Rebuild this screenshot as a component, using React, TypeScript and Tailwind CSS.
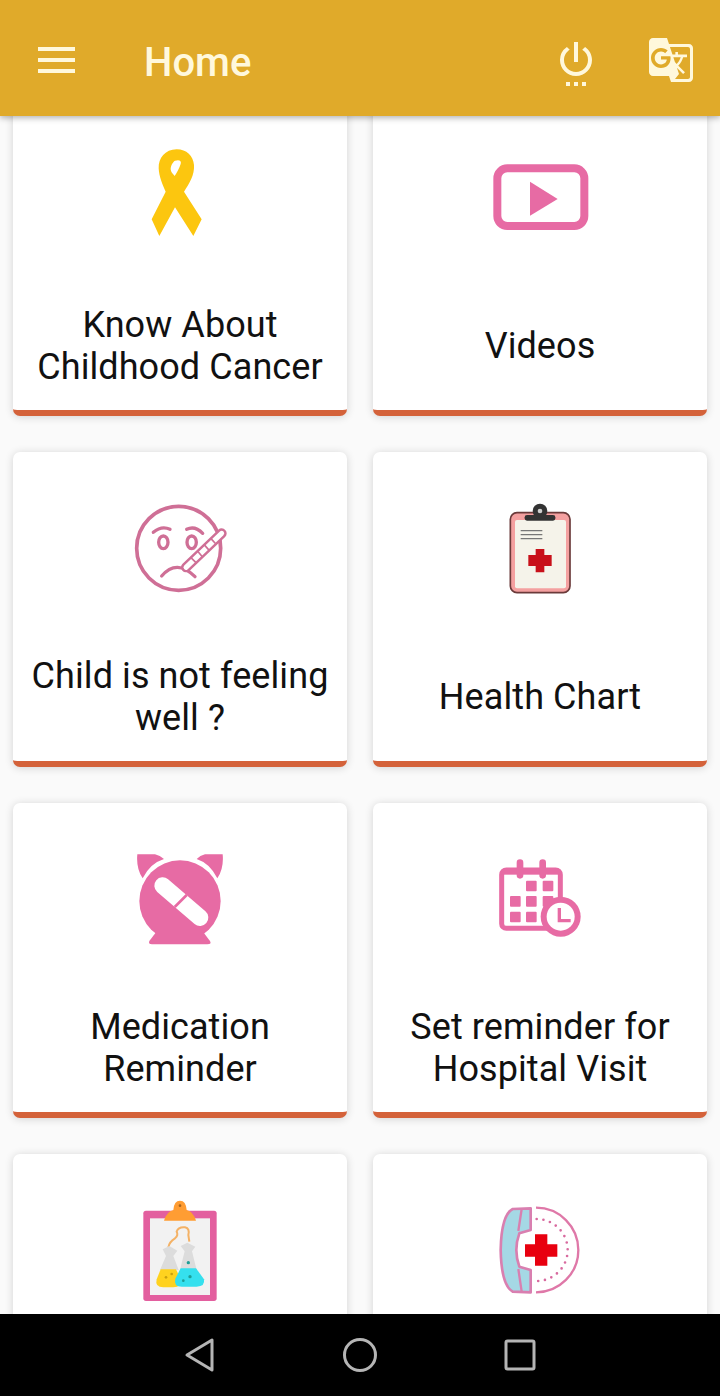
import React from "react";
import { MdGTranslate, MdSettingsPower } from "react-icons/md";

const iconClass = "w-[120px] h-[120px] blur-[0.4px]";

const Ribbon = () => (
  <svg viewBox="0 0 360 360" className={iconClass}>
    <path fillRule="evenodd" fill="#fcc60f" d="M170 58C135 58 115 85 116 115C117 140 128 165 137 185L95 268L118 318L165 232L220 318L245 268L192 185C208 160 224 135 222 105C220 78 200 58 170 58ZM165 92C178 88 185 92 182 102C178 115 170 130 164 138C158 132 152 125 152 118C152 108 158 96 165 92Z" />
  </svg>
);

const Video = () => (
  <svg viewBox="0 -30 360 360" className={iconClass}>
    <rect x="52" y="85" width="261" height="173" rx="30" fill="none" stroke="#e76ba4" strokeWidth="24" />
    <path d="M150 125L233 177L150 227Z" fill="#e76ba4" />
  </svg>
);

const Sick = () => (
  <svg viewBox="0 -27 360 360" className={iconClass} fill="none" stroke="#cf6f96" strokeLinecap="round">
    <circle cx="176" cy="175" r="126" strokeWidth="11" />
    <path d="M100 127Q125 106 150 118M200 118Q225 106 248 130" strokeWidth="10" />
    <ellipse cx="130" cy="157" rx="14" ry="19" strokeWidth="10" />
    <ellipse cx="215" cy="157" rx="14" ry="19" strokeWidth="10" />
    <path d="M125 258Q170 205 225 260" strokeWidth="10" />
    <path d="M198 232L305 130" stroke="#cf6f96" strokeWidth="30" />
    <path d="M198 232L305 130" stroke="#ffffff" strokeWidth="15" />
    <path d="M215 205L228 218M235 186L245 198M255 167L265 178M275 148L285 159" strokeWidth="5" />
  </svg>
);

const Chart = () => (
  <svg viewBox="-30 -42 360 360" className={iconClass}>
    <rect x="61" y="53" width="179" height="240" rx="20" fill="#f4a0a0" stroke="#6b3a3a" strokeWidth="5" />
    <rect x="75" y="75" width="153" height="205" rx="6" fill="#f5f3ea" />
    <circle cx="150" cy="48" r="22" fill="#333333" />
    <circle cx="150" cy="48" r="7" fill="#cfcfcf" />
    <rect x="104" y="60" width="92" height="17" rx="7" fill="#333333" />
    <path d="M92 107H157M92 119H157M92 131H157" stroke="#777777" strokeWidth="4" />
    <path d="M137 162H163V180H185V213H163V232H137V213H115V180H137Z" fill="#c8101a" />
  </svg>
);

const Alarm = () => (
  <svg viewBox="0 -39 360 360" className={iconClass}>
    <path d="M52 28L105 28Q120 32 132 42Q90 55 68 100Q48 70 52 28Z" fill="#e76ba4" />
    <path d="M308 28L255 28Q240 32 230 42Q270 55 292 100Q312 70 308 28Z" fill="#e76ba4" />
    <circle cx="180" cy="168" r="122" fill="#e76ba4" />
    <path d="M108 262L88 288Q84 298 96 298L262 298Q276 298 270 288L250 262Z" fill="#e76ba4" />
    <path d="M128 122L240 218" stroke="#ffffff" strokeWidth="50" strokeLinecap="round" />
    <path d="M164 186L200 150" stroke="#e76ba4" strokeWidth="8" />
  </svg>
);

const Calendar = () => (
  <svg viewBox="-30 -54 360 360" className={iconClass}>
    <rect x="35" y="60" width="176" height="175" rx="14" fill="#ffffff" stroke="#e76ba4" strokeWidth="15" />
    <rect x="35" y="60" width="176" height="14" fill="#e76ba4" />
    <path d="M90 38V76M158 38V76" stroke="#e76ba4" strokeWidth="20" strokeLinecap="round" />
    {[
      [108, 92], [158, 92],
      [60, 138], [108, 138], [158, 138],
      [60, 185], [108, 185],
    ].map(([x, y]) => (
      <rect key={`${x}-${y}`} x={x} y={y} width="32" height="32" rx="3" fill="#e76ba4" />
    ))}
    <circle cx="212" cy="200" r="60" fill="#e76ba4" />
    <circle cx="212" cy="200" r="42" fill="#ffffff" />
    <path d="M208 174V212H242" fill="none" stroke="#e76ba4" strokeWidth="10" />
  </svg>
);

const Flask = () => (
  <svg viewBox="-30 -21 360 360" className={iconClass}>
    <rect x="40" y="62" width="220" height="271" rx="8" fill="#e35f9f" />
    <rect x="60" y="85" width="180" height="230" fill="#f2f2f2" />
    <path d="M102 92Q110 65 130 60Q132 32 150 32Q168 32 170 60Q190 65 198 92Z" fill="#ff9d33" />
    <circle cx="150" cy="47" r="4" fill="#a8641c" />
    <path d="M115 172Q118 155 135 145Q146 135 140 125Q145 110 165 112Q180 115 175 135L178 155" fill="none" stroke="#f4b266" strokeWidth="6" />
    <path d="M98 178L118 168L142 182L130 198L146 240H90L108 198Z" fill="#dcdcdc" />
    <path d="M152 168L172 158L196 170L186 184L200 240H150L164 184Z" fill="#dcdcdc" />
    <path d="M92 238H138L152 268Q156 292 130 292H100Q74 292 80 268Z" fill="#ffd21f" />
    <path d="M152 235H198L222 268Q226 290 200 290H155Q130 290 136 266Z" fill="#35e0ee" />
    <circle cx="175" cy="218" r="5" fill="#1f9e96" />
    <circle cx="180" cy="260" r="5" fill="#1f9e96" />
    <circle cx="160" cy="272" r="4" fill="#1f9e96" />
    <circle cx="125" cy="252" r="4" fill="#c9a010" />
    <circle cx="108" cy="262" r="4" fill="#c9a010" />
  </svg>
);

const Phone = () => (
  <svg viewBox="-30 -36 360 360" className={iconClass}>
    <path d="M138 38A127 127 0 0 1 138 292" fill="none" stroke="#df78a8" strokeWidth="7" />
    <path d="M140 72A93 93 0 0 1 140 258" fill="none" stroke="#d86a9f" strokeWidth="8" strokeLinecap="round" strokeDasharray="0 20.5" />
    <path d="M135 118H172V148H202V185H172V212H135V185H105V148H135Z" fill="#e8000f" />
    <path d="M68 42Q34 60 32 165Q34 270 68 290L122 292L122 225L88 215Q70 165 88 115L122 105L122 40Z" fill="#a5d8e5" stroke="#d97fb0" strokeWidth="8" strokeLinejoin="round" />
    <path d="M95 42L85 108M95 290L85 222" fill="none" stroke="#d97fb0" strokeWidth="7" />
  </svg>
);

const items: { id: string; Icon: React.FC; lines: string[] }[] = [
  { id: "cancer", Icon: Ribbon, lines: ["Know About", "Childhood Cancer"] },
  { id: "videos", Icon: Video, lines: ["Videos"] },
  { id: "sick", Icon: Sick, lines: ["Child is not feeling", "well ?"] },
  { id: "chart", Icon: Chart, lines: ["Health Chart"] },
  { id: "med", Icon: Alarm, lines: ["Medication", "Reminder"] },
  { id: "visit", Icon: Calendar, lines: ["Set reminder for", "Hospital Visit"] },
  { id: "lab", Icon: Flask, lines: [] },
  { id: "phone", Icon: Phone, lines: [] },
];

function Card({ Icon, lines }: { Icon: React.FC; lines: string[] }) {
  return (
    <div className="h-[315px] flex flex-col items-center bg-white rounded-[7px] border-b-[6px] border-[#d4623a] shadow-[0_1px_8px_rgba(0,0,0,0.16)] pt-[29px]">
      <Icon />
      <div className="mt-[54px] h-[84px] flex flex-col justify-center text-center text-[36px] leading-[42px] tracking-[0.08px] text-[#111111]">
        {lines.map((l) => (
          <div key={l}>{l}</div>
        ))}
      </div>
    </div>
  );
}

export default function App() {
  return (
    <div className="w-[720px] h-[1396px] flex flex-col overflow-hidden bg-[#fafafa] font-['Roboto',sans-serif]">
      <header className="relative z-10 h-[116px] shrink-0 flex items-center bg-[#e0aa2a] shadow-[0_2px_6px_rgba(0,0,0,0.3)] text-[#fff8dc]">
        <div className="ml-[38px] w-[37px] flex flex-col gap-[7px] mt-[4px]">
          <div className="h-[4px] bg-[#fff8dc]" />
          <div className="h-[4px] bg-[#fff8dc]" />
          <div className="h-[4px] bg-[#fff8dc]" />
        </div>
        <div className="ml-[69px] text-[40px] leading-[46px] font-medium mt-[10px]">Home</div>
        <div className="ml-auto mr-[25px] flex items-center gap-[47px]">
          <MdSettingsPower size={48} className="mt-[7px]" />
          <MdGTranslate size={48} className="mt-[4px]" />
        </div>
      </header>
      <main className="flex-1 overflow-hidden">
        <div className="grid grid-cols-2 gap-x-[26px] gap-y-[36px] px-[13px] mt-[-15px]">
          {items.map((it) => (
            <Card key={it.id} Icon={it.Icon} lines={it.lines} />
          ))}
        </div>
      </main>
      <nav className="relative z-10 h-[82px] shrink-0 flex items-center justify-center bg-black">
        <div className="w-[160px] flex justify-center">
          <svg width="32" height="36" viewBox="0 0 32 36" fill="none" stroke="#b5b5b5" strokeWidth="3" strokeLinejoin="round">
            <path d="M28 3V33L3 18Z" />
          </svg>
        </div>
        <div className="w-[160px] flex justify-center">
          <svg width="34" height="34" viewBox="0 0 34 34" fill="none" stroke="#b5b5b5" strokeWidth="3">
            <circle cx="17" cy="17" r="15.5" />
          </svg>
        </div>
        <div className="w-[160px] flex justify-center">
          <svg width="32" height="32" viewBox="0 0 32 32" fill="none" stroke="#b5b5b5" strokeWidth="3" strokeLinejoin="round">
            <rect x="2" y="2" width="28" height="28" rx="1.5" />
          </svg>
        </div>
      </nav>
    </div>
  );
}
